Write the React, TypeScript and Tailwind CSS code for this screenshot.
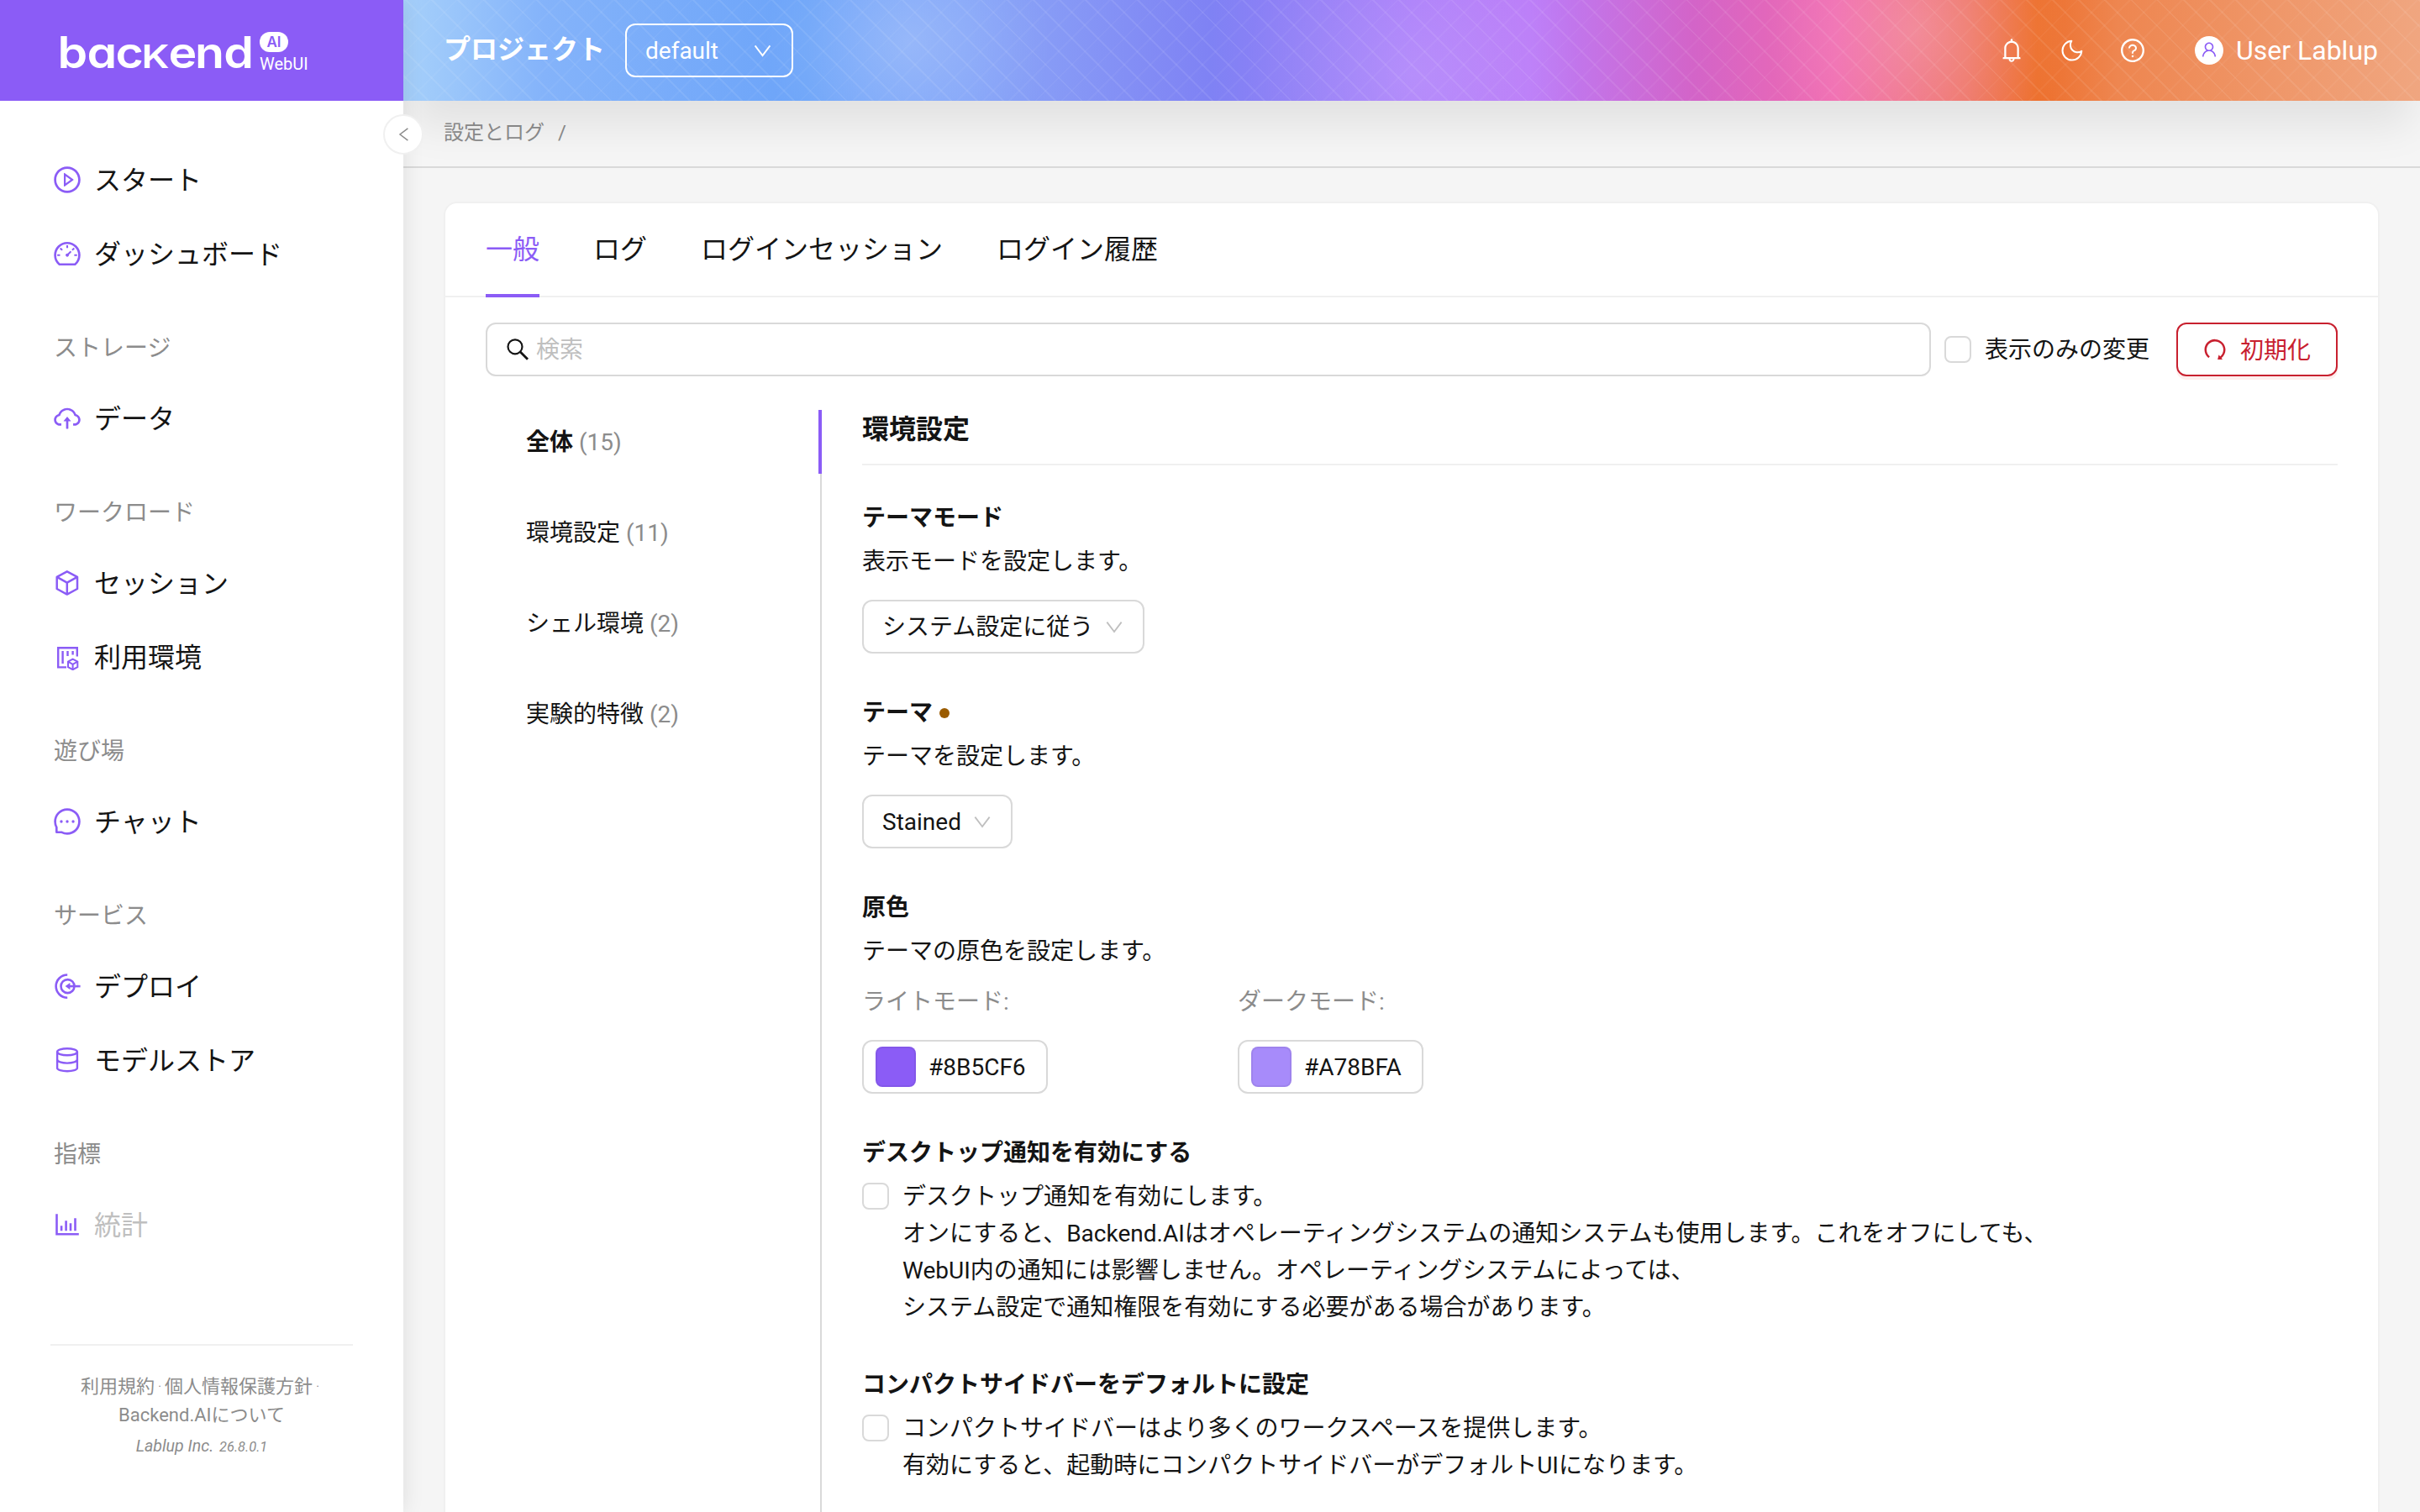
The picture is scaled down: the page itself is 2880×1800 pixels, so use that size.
import type { ReactNode } from "react";
import {
  AiOutlineBell,
  AiOutlineCloudUpload,
  AiOutlineDashboard,
  AiOutlineMessage,
  AiOutlinePlayCircle,
  AiOutlineQuestionCircle,
  AiOutlineRedo,
  AiOutlineUser,
} from "react-icons/ai";

type MenuEntry = { label: string; icon: ReactNode; disabled?: boolean };
type MenuSection = { title?: string; items: MenuEntry[] };

function Chevron({ className }: { className?: string }) {
  return (
    <svg viewBox="0 0 22 16" fill="none" className={className}>
      <path d="M1.5 1.5 11 14 20.5 1.5" stroke="currentColor" strokeWidth={2} />
    </svg>
  );
}

function SessionIcon() {
  return (
    <svg viewBox="0 0 32 32" fill="none" stroke="currentColor" strokeWidth={2.5} strokeLinejoin="round" className="size-8">
      <path d="M15.8 2.3 28 8.8v14.2l-12.2 6.6L3.7 23V8.8z" />
      <path d="M3.7 8.8 15.8 15.6 28 8.8M15.8 15.6v14" />
    </svg>
  );
}

function EnvironmentIcon() {
  return (
    <svg viewBox="0 0 32 32" fill="none" stroke="currentColor" strokeWidth={2.4} className="size-8">
      <path d="M15 28.4H5.2V5.2h22.6v10.3" />
      <path d="M10.6 9v15M16.5 9v6M22.6 9v4.5" />
      <path d="m22.6 18.6 5.7 3.1v6.4l-5.7 3.1-5.6-3.1v-6.4z" strokeWidth={2} />
      <path d="m17 21.7 5.6 3.2 5.7-3.2M22.6 24.9v6.3" strokeWidth={2} />
    </svg>
  );
}

function DeployIcon() {
  return (
    <svg viewBox="0 0 32 32" fill="none" stroke="currentColor" strokeWidth={2.6} className="size-8">
      <path d="M16.2 2.5a13.6 13.6 0 0 0 0 27.2" />
      <circle cx="16.5" cy="16.1" r="8" />
      <path d="M31.6 16.1H18" />
      <path d="M13.6 16.1 19.4 12v8.2z" fill="currentColor" stroke="none" />
    </svg>
  );
}

function ModelStoreIcon() {
  return (
    <svg viewBox="0 0 32 32" fill="none" stroke="currentColor" strokeWidth={2.4} className="size-8">
      <ellipse cx="16" cy="6.2" rx="11.9" ry="4" />
      <path d="M4.1 6.2v19.4c0 2 5.3 3.6 11.9 3.6s11.9-1.6 11.9-3.6V6.2" />
      <path d="M4.1 15.6c0 2.2 5.3 4 11.9 4s11.9-1.8 11.9-4" />
    </svg>
  );
}

function StatisticsIcon() {
  return (
    <svg viewBox="0 0 32 32" fill="currentColor" className="size-8">
      <path d="M2.2 3.2h2.6v22.9h25v2.5H2.2z" />
      <path d="M7.8 17.3h2.6v6H7.8zM13.3 11.2h2.6v12.1h-2.6zM18.7 14.2h2.6v9.1h-2.6zM24.2 8.2h2.6v15.1h-2.6z" />
    </svg>
  );
}

function MoonIcon() {
  return (
    <svg viewBox="0 0 32 32" fill="none" stroke="currentColor" strokeWidth={2} strokeLinejoin="round" className="size-8">
      <path d="M15.4 4.8A11.4 11.4 0 1 0 27.3 16.8 8.6 8.6 0 0 1 15.4 4.8z" />
    </svg>
  );
}

function SearchIcon() {
  return (
    <svg viewBox="0 0 28 28" fill="none" stroke="currentColor" className="size-7">
      <circle cx="11" cy="10.8" r="8.5" strokeWidth={2.2} />
      <path d="m17 16.8 9 9" strokeWidth={2.8} />
    </svg>
  );
}

const sections: MenuSection[] = [
  {
    items: [
      { label: "スタート", icon: <AiOutlinePlayCircle className="-m-0.5 size-9" /> },
      { label: "ダッシュボード", icon: <AiOutlineDashboard className="-m-0.5 size-9" /> },
    ],
  },
  {
    title: "ストレージ",
    items: [{ label: "データ", icon: <AiOutlineCloudUpload className="-m-0.5 size-9" /> }],
  },
  {
    title: "ワークロード",
    items: [
      { label: "セッション", icon: <SessionIcon /> },
      { label: "利用環境", icon: <EnvironmentIcon /> },
    ],
  },
  {
    title: "遊び場",
    items: [{ label: "チャット", icon: <AiOutlineMessage className="-m-0.5 size-9" /> }],
  },
  {
    title: "サービス",
    items: [
      { label: "デプロイ", icon: <DeployIcon /> },
      { label: "モデルストア", icon: <ModelStoreIcon /> },
    ],
  },
  {
    title: "指標",
    items: [{ label: "統計", icon: <StatisticsIcon />, disabled: true }],
  },
];

const tabs = ["一般", "ログ", "ログインセッション", "ログイン履歴"];

const groups = [
  { label: "全体", count: 15 },
  { label: "環境設定", count: 11 },
  { label: "シェル環境", count: 2 },
  { label: "実験的特徴", count: 2 },
];

function Logo() {
  return (
    <div className="flex h-[120px] shrink-0 items-start bg-[#8b5cf6] pl-[50px] text-white">
      <svg
        viewBox="-20 0 252 120"
        className="h-[120px] w-[252px] font-['Inter',sans-serif] font-semibold [font-feature-settings:'cv11']"
        fill="currentColor"
      >
        <g transform="scale(1.1 1)">
          <text y="81" fontSize="52" x="-1.4 30.5 61.4">
            bac
          </text>
          <text y="81" fontSize="38.5" x="89.5" textLength="30" lengthAdjust="spacingAndGlyphs">
            K
          </text>
          <text y="81" fontSize="52" x="118.6 147.2 178.4">
            end
          </text>
        </g>
      </svg>
      <div className="ml-[7px] mt-[38px] flex flex-col items-start">
        <span className="flex h-6 w-[34px] items-center justify-center rounded-full bg-white font-['Inter',sans-serif] text-[17px] font-semibold leading-none text-[#8b5cf6]">
          AI
        </span>
        <span className="mt-[2px] text-[20px] leading-[24px]">WebUI</span>
      </div>
    </div>
  );
}

function Sidebar() {
  return (
    <aside className="relative z-20 flex w-[480px] shrink-0 flex-col bg-white shadow-[0_0_24px_rgba(0,0,0,0.1)]">
      <Logo />
      <nav className="flex flex-1 flex-col pt-[50px]">
        {sections.map((section, i) => (
          <div key={i}>
            {section.title && (
              <div className="flex h-[108px] items-start pl-16 pt-[47px] text-[28px] leading-[44px] text-[#8c8c8c]">
                {section.title}
              </div>
            )}
            {section.items.map((item) => (
              <div key={item.label} className="flex h-[88px] items-center gap-4 pl-16 text-[#8b5cf6]">
                {item.icon}
                <span
                  className={
                    item.disabled ? "pt-0.5 text-[32px] text-[#bfbfbf]" : "pt-0.5 text-[32px] text-[#141414]"
                  }
                >
                  {item.label}
                </span>
              </div>
            ))}
          </div>
        ))}
      </nav>
      <footer className="mx-[60px] flex h-[200px] flex-col items-center border-t-2 border-[#f0f0f0] pt-8 text-[22px] leading-[34px] text-[#8c8c8c]">
        <div className="flex">
          利用規約
          <span className="w-3 text-center text-[14px]">·</span>
          個人情報保護方針
          <span className="w-3 text-center text-[14px]">·</span>
        </div>
        <div>Backend.AIについて</div>
        <div className="mt-[3px] italic text-[19.6px]">
          Lablup Inc. <span className="ml-0.5 text-[16.4px]">26.8.0.1</span>
        </div>
      </footer>
      <button
        type="button"
        className="absolute left-[456px] top-[136px] flex size-12 items-center justify-center rounded-full border-2 border-[#f0f0f0] bg-white text-[#8c8c8c]"
      >
        <Chevron className="h-[12px] w-[17px] rotate-90" />
      </button>
    </aside>
  );
}

const headerBackground =
  "bg-[repeating-linear-gradient(45deg,transparent_0_20px,rgba(255,255,255,0.08)_20px_22px),repeating-linear-gradient(-45deg,transparent_0_20px,rgba(255,255,255,0.04)_20px_22px),radial-gradient(circle_at_25%_42%,rgba(255,255,255,0.23),transparent_170px),radial-gradient(circle_at_50%_75%,rgba(255,255,255,0.15),transparent_200px),radial-gradient(circle_at_75%_30%,rgba(255,255,255,0.2),transparent_180px),linear-gradient(90deg,#a6d0fa_0%,#84b3fa_7%,#6ca4f9_20%,#7ea1f8_28%,#879bf6_32%,#7f82f4_40%,#a97bfa_50%,#bb7cf8_56%,#d364c8_64%,#f06aaf_71%,#ee7165_77.5%,#ed6f2c_81%,#ee8650_85%,#f0a680_100%)]";

function Header() {
  return (
    <header
      className={`relative z-10 flex h-[120px] shrink-0 items-center pl-12 pr-[50px] text-white shadow-[0_40px_50px_-10px_rgba(0,0,0,0.08)] ${headerBackground}`}
    >
      <span className="pb-0.5 text-[32px] font-semibold">プロジェクト</span>
      <div className="ml-6 flex h-16 w-[200px] items-center justify-between rounded-xl border-2 border-white pl-[22px] pr-6 text-[28px]">
        <span className="pt-0.5">default</span>
        <Chevron className="h-[15px] w-[21px]" />
      </div>
      <div className="ml-auto flex items-center gap-10">
        <AiOutlineBell className="size-8" />
        <MoonIcon />
        <AiOutlineQuestionCircle className="size-8" />
      </div>
      <div className="ml-[58px] flex items-center gap-[15px]">
        <span className="flex size-[34px] items-center justify-center rounded-full bg-white pb-[3px] text-[#8b5cf6]">
          <AiOutlineUser className="size-[22px]" />
        </span>
        <span className="text-[32px]">User Lablup</span>
      </div>
    </header>
  );
}

function Checkbox() {
  return <span className="size-8 shrink-0 rounded-lg border-2 border-[#d9d9d9] bg-white" />;
}

function SettingItem({
  title,
  description,
  modified,
  children,
}: {
  title: string;
  description?: string;
  modified?: boolean;
  children: ReactNode;
}) {
  return (
    <section className="flex flex-col items-start">
      <h4 className="flex items-center gap-2 pt-px font-semibold">
        {title}
        {modified && <span className="mb-px size-3 rounded-full bg-[#9a5b00]" />}
      </h4>
      {description && <p className="-mb-px mt-2">{description}</p>}
      {children}
    </section>
  );
}

function Select({ value }: { value: string }) {
  return (
    <div className="mt-6 flex h-16 items-center gap-[15px] rounded-xl border-2 border-[#d9d9d9] pl-[22px] pr-6">
      <span className="pt-0.5">{value}</span>
      <Chevron className="h-[15px] w-5 text-[#bfbfbf]" />
    </div>
  );
}

function ColorSetting({ label, hex, swatch }: { label: string; hex: string; swatch: string }) {
  return (
    <div className="w-[447px]">
      <div className="-mb-px pt-px text-[#8c8c8c]">{label}</div>
      <div className="mt-6 flex h-16 w-[221px] items-center gap-[15px] rounded-xl border-2 border-[#d9d9d9] pl-[14px]">
        <span className={`size-12 rounded-lg border-2 border-black/5 ${swatch}`} />
        <span className="pt-0.5">{hex}</span>
      </div>
    </div>
  );
}

function CheckSetting({ lines }: { lines: string[] }) {
  return (
    <div className="-mb-px mt-[7px] flex gap-4">
      <span className="flex h-11 items-center">
        <Checkbox />
      </span>
      <div className="pt-px">
        {lines.map((line) => (
          <div key={line} className="whitespace-nowrap">
            {line}
          </div>
        ))}
      </div>
    </div>
  );
}

function Settings() {
  return (
    <div className="flex flex-1 px-12 pt-8">
      <div className="mt-2 flex w-[400px] shrink-0 flex-col gap-8 border-r-2 border-[#d9d9d9]">
        {groups.map((group, i) => (
          <div
            key={group.label}
            className={
              i === 0
                ? "-mr-0.5 flex h-[76px] items-center gap-[7px] border-r-4 border-[#8b5cf6] pl-12 pt-0.5"
                : "flex h-[76px] items-center gap-[7px] pl-12 pt-0.5"
            }
          >
            <span className={i === 0 ? "font-semibold" : ""}>{group.label}</span>
            <span className="text-[#8c8c8c]">({group.count})</span>
          </div>
        ))}
      </div>
      <div className="flex-1 pl-12">
        <h3 className="flex h-[74px] items-center border-b-2 border-[#f0f0f0] pb-2.5 text-[32px] font-semibold">
          環境設定
        </h3>
        <div className="mt-10 flex flex-col gap-12">
          <SettingItem title="テーマモード" description="表示モードを設定します。">
            <Select value="システム設定に従う" />
          </SettingItem>
          <SettingItem title="テーマ" description="テーマを設定します。" modified>
            <Select value="Stained" />
          </SettingItem>
          <SettingItem title="原色" description="テーマの原色を設定します。">
            <div className="mt-4 flex">
              <ColorSetting label="ライトモード:" hex="#8B5CF6" swatch="bg-[#8b5cf6]" />
              <ColorSetting label="ダークモード:" hex="#A78BFA" swatch="bg-[#a78bfa]" />
            </div>
          </SettingItem>
          <SettingItem title="デスクトップ通知を有効にする">
            <CheckSetting
              lines={[
                "デスクトップ通知を有効にします。",
                "オンにすると、Backend.AIはオペレーティングシステムの通知システムも使用します。これをオフにしても、",
                "WebUI内の通知には影響しません。オペレーティングシステムによっては、",
                "システム設定で通知権限を有効にする必要がある場合があります。",
              ]}
            />
          </SettingItem>
          <SettingItem title="コンパクトサイドバーをデフォルトに設定">
            <CheckSetting
              lines={[
                "コンパクトサイドバーはより多くのワークスペースを提供します。",
                "有効にすると、起動時にコンパクトサイドバーがデフォルトUIになります。",
              ]}
            />
          </SettingItem>
        </div>
      </div>
    </div>
  );
}

export default function App() {
  return (
    <div
      lang="ja"
      className="flex h-[1800px] w-[2880px] overflow-hidden bg-[#f5f5f5] font-['Roboto','Noto_Sans_CJK_JP',sans-serif] text-[28px] leading-[44px] text-[#141414]"
    >
      <Sidebar />
      <div className="flex min-w-0 flex-1 flex-col">
        <Header />
        <div className="flex h-20 shrink-0 items-center gap-4 border-b-2 border-[#d9d9d9] pb-0.5 pl-12 text-[24px] text-[#8c8c8c]">
          <span>設定とログ</span>
          <span>/</span>
        </div>
        <main className="mx-12 mt-10 flex min-h-0 flex-1 flex-col rounded-t-2xl border-2 border-b-0 border-[#f0f0f0] bg-white">
          <div className="flex h-28 shrink-0 gap-16 border-b-2 border-[#f0f0f0] px-12 text-[32px]">
            {tabs.map((tab, i) => (
              <div
                key={tab}
                className={
                  i === 0
                    ? "-mb-0.5 flex items-center border-b-4 border-[#8b5cf6] pt-0.5 text-[#8b5cf6]"
                    : "flex items-center"
                }
              >
                {tab}
              </div>
            ))}
          </div>
          <div className="mt-[30px] flex h-16 shrink-0 items-center px-12">
            <div className="flex h-16 flex-1 items-center gap-2 rounded-xl border-2 border-[#d9d9d9] pl-[22px]">
              <SearchIcon />
              <span className="pt-0.5 text-[#bfbfbf]">検索</span>
            </div>
            <div className="ml-4 flex items-center gap-4">
              <Checkbox />
              <span className="pt-0.5">表示のみの変更</span>
            </div>
            <button
              type="button"
              className="ml-8 flex h-16 items-center gap-3.5 rounded-xl border-2 border-[#c8202f] pl-7 pr-[30px] text-[#c8202f] shadow-[0_4px_0_#ffeeed]"
            >
              <AiOutlineRedo className="size-8" />
              <span className="pt-[3px]">初期化</span>
            </button>
          </div>
          <Settings />
        </main>
      </div>
    </div>
  );
}
